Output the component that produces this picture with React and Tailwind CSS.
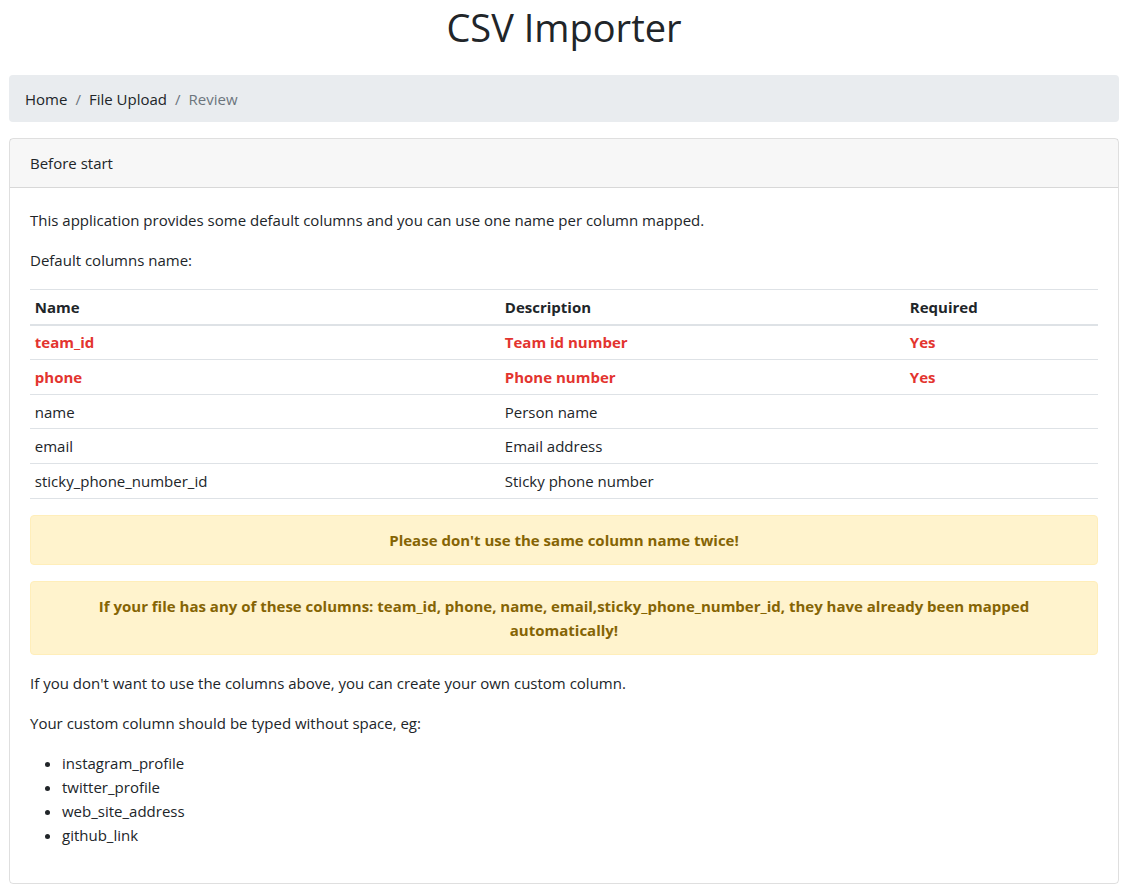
const rows = [
    { name: 'team_id', description: 'Team id number', required: 'Yes' },
    { name: 'phone', description: 'Phone number', required: 'Yes' },
    { name: 'name', description: 'Person name', required: '' },
    { name: 'email', description: 'Email address', required: '' },
    { name: 'sticky_phone_number_id', description: 'Sticky phone number', required: '' },
];

const examples = ['instagram_profile', 'twitter_profile', 'web_site_address', 'github_link'];

export default function App() {
    return (
        <div
            className="min-h-screen bg-white pl-[9px] pr-[7px] text-[15px] leading-[24px] text-[#212529]"
            style={{ fontFamily: '"Open Sans", "Noto Sans", sans-serif' }}
        >
            <h1 className="pt-[4px] pb-[25px] text-center text-[38px] leading-[46px] font-normal">
                CSV Importer
            </h1>

            <nav className="mb-4 rounded bg-[#e9ecef] px-4 py-[11.5px]">
                <ol className="flex items-center">
                    <li>Home</li>
                    <li className="px-2 text-[#6c757d]">/</li>
                    <li>File Upload</li>
                    <li className="px-2 text-[#6c757d]">/</li>
                    <li className="text-[#6c757d]">Review</li>
                </ol>
            </nav>

            <div className="mb-1 rounded border border-black/[0.125]">
                <div className="border-b border-black/[0.125] bg-black/[0.03] px-5 py-3">
                    Before start
                </div>

                <div className="p-5">
                    <p className="mb-4">
                        This application provides some default columns and you can use one name per column mapped.
                    </p>
                    <p className="mb-[17px]">Default columns name:</p>

                    <table className="mb-4 w-full border-collapse text-left">
                        <thead>
                            <tr className="border-t border-b-2 border-[#dee2e6]">
                                <th className="w-[470px] p-[4.8px] font-bold">Name</th>
                                <th className="w-[405px] p-[4.8px] font-bold">Description</th>
                                <th className="p-[4.8px] font-bold">Required</th>
                            </tr>
                        </thead>
                        <tbody>
                            {rows.map((row) => (
                                <tr
                                    key={row.name}
                                    className={
                                        row.required
                                            ? 'border-b border-[#dee2e6] font-bold text-[#e3342f]'
                                            : 'border-b border-[#dee2e6]'
                                    }
                                >
                                    <td className="p-[4.8px]">{row.name}</td>
                                    <td className="p-[4.8px]">{row.description}</td>
                                    <td className="p-[4.8px]">{row.required}</td>
                                </tr>
                            ))}
                        </tbody>
                    </table>

                    <div className="mb-4 rounded border border-[#ffeeba] bg-[#fff3cd] px-5 py-3 text-center font-bold text-[#856404]">
                        Please don't use the same column name twice!
                    </div>

                    <div className="mb-4 rounded border border-[#ffeeba] bg-[#fff3cd] px-5 py-3 text-center font-bold text-[#856404]">
                        If your file has any of these columns: team_id, phone, name, email,sticky_phone_number_id, they
                        have already been mapped automatically!
                    </div>

                    <p className="mb-4">If you don't want to use the columns above, you can create your own custom column.</p>
                    <p className="mb-4">Your custom column should be typed without space, eg:</p>

                    <ul className="mb-4 list-disc pl-8">
                        {examples.map((item) => (
                            <li key={item}>{item}</li>
                        ))}
                    </ul>
                </div>
            </div>
        </div>
    );
}
